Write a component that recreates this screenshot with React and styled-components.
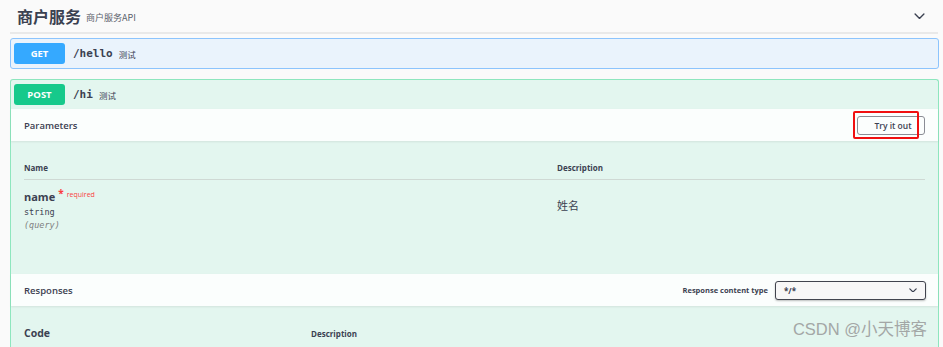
import React from 'react';
import styled, {createGlobalStyle, css} from 'styled-components';

const GlobalStyle = createGlobalStyle`
  html, body {
    margin: 0;
    padding: 0;
    background: #fafafa;
    font-family: "Open Sans", "Noto Sans CJK SC", sans-serif;
    color: #3b4151;
  }
`;

const methods = {
  get: {color: '#35a9ff', border: '#8cc4fd', bg: '#eaf3fc'},
  post: {color: '#16c98b', border: '#8ee6be', bg: '#e3f6ef'},
};

const Page = styled.div`
  position: relative;
  width: 943px;
  height: 347px;
  overflow: hidden;
  padding: 0 4px 0 10px;
  box-sizing: border-box;
`;

const TagHeader = styled.div`
  display: flex;
  align-items: center;
  height: 32px;
  padding: 0 13px 0 7px;
  border-bottom: 2px solid #e9e9e9;
  margin-right: 1px;
`;

const TagTitle = styled.h3`
  margin: 0;
  font-size: 16px;
  font-weight: 700;
  color: #3b4151;
  font-family: "Noto Sans CJK SC", sans-serif;
`;

const TagSub = styled.small`
  margin-left: 5px;
  font-size: 9px;
  color: #5a5f6b;
  font-family: "Noto Sans CJK SC", sans-serif;
  padding-top: 3px;
`;

const Spacer = styled.div`
  flex: 1;
`;

const Opblock = styled.div`
  margin-top: ${p => (p.$method === 'get' ? '4px' : '10px')};
  border: 1px solid ${p => methods[p.$method].border};
  background: ${p => methods[p.$method].bg};
  border-radius: 3px;
  ${p =>
    p.$open &&
    css`
      border-bottom: none;
      border-radius: 3px 3px 0 0;
    `}
`;

const Summary = styled.div`
  display: flex;
  align-items: center;
  padding: 4px 3px;
`;

const Badge = styled.span`
  display: inline-flex;
  align-items: center;
  justify-content: center;
  width: 51px;
  height: 21px;
  border-radius: 3px;
  background: ${p => methods[p.$method].color};
  color: #fff;
  font-size: 9.5px;
  font-weight: 700;
  font-family: "Open Sans", sans-serif;
`;

const Path = styled.span`
  margin-left: 8px;
  font-family: "DejaVu Sans Mono", monospace;
  font-weight: 700;
  font-size: 11px;
  color: #3b4151;
`;

const PathDesc = styled.span`
  margin-left: 6px;
  font-size: 8.5px;
  color: #3b4151;
  font-family: "Noto Sans CJK SC", sans-serif;
`;

const SectionHeader = styled.div`
  display: flex;
  align-items: center;
  justify-content: space-between;
  height: 32px;
  padding: 0 13px;
  background: rgba(255, 255, 255, 0.85);
  box-shadow: 0 1px 2px rgba(0, 0, 0, 0.08);
`;

const SectionTitle = styled.h4`
  margin: 0;
  font-size: 9.5px;
  font-weight: 600;
  color: #3b4151;
`;

const TryWrap = styled.span`
  position: relative;
  display: inline-flex;
`;

const TryButton = styled.button`
  width: 68px;
  height: 19px;
  border: 1.5px solid #8a8d95;
  border-radius: 3px;
  background: transparent;
  font-family: "Open Sans", sans-serif;
  font-size: 8.5px;
  font-weight: 600;
  color: #3b4151;
  padding: 0 0 0 4px;
`;

const Highlight = styled.span`
  position: absolute;
  left: -4px;
  top: -5px;
  width: 66px;
  height: 28px;
  border: 2px solid #f01010;
  border-radius: 2px;
  box-sizing: border-box;
  pointer-events: none;
`;

const ParamsBody = styled.div`
  padding: 14px 13px 0;
  height: 133px;
  box-sizing: border-box;
`;

const Grid = styled.div`
  display: grid;
  grid-template-columns: 533px 1fr;
`;

const HeadCell = styled.div`
  font-size: 8px;
  font-weight: 700;
  color: #3b4151;
  padding: 7px 0 6px;
  border-bottom: 1.5px solid #cfd9d4;
`;

const Cell = styled.div`
  padding-top: 9px;
`;

const ParamName = styled.div`
  font-size: 11px;
  font-weight: 700;
  color: #3b4151;
  display: flex;
  align-items: flex-start;
`;

const Required = styled.span`
  color: #f93e3e;
  font-size: 7px;
  font-weight: 400;
  margin-left: 3px;
  position: relative;
  top: -3px;
  &::before {
    content: '*';
    font-size: 10px;
    font-weight: 700;
    margin-right: 3px;
  }
`;

const ParamType = styled.div`
  font-family: "DejaVu Sans Mono", monospace;
  font-size: 8.5px;
  color: #3b4151;
  margin-top: 3px;
`;

const ParamIn = styled.div`
  font-family: "DejaVu Sans Mono", monospace;
  font-size: 8.5px;
  font-style: italic;
  color: #808080;
  margin-top: 3px;
`;

const ParamDesc = styled.div`
  font-family: "Noto Sans CJK SC", sans-serif;
  font-size: 11px;
  color: #3b4151;
  padding-top: 17px;
`;

const ContentType = styled.label`
  display: flex;
  align-items: center;
  gap: 7px;
  font-size: 7.5px;
  font-weight: 700;
  color: #3b4151;
  margin-right: -1px;
`;

const Select = styled.div`
  display: flex;
  align-items: center;
  justify-content: space-between;
  width: 151px;
  height: 19px;
  box-sizing: border-box;
  border: 1.5px solid #41444e;
  border-radius: 3px;
  background: #f7f7f7;
  padding: 0 8px;
  font-size: 8px;
  font-weight: 700;
  box-shadow: 0 1px 2px rgba(0, 0, 0, 0.25);
`;

const RespGrid = styled.div`
  display: grid;
  grid-template-columns: 287px 1fr;
  padding: 20px 13px 30px;
  align-items: center;
`;

const CodeHead = styled.div`
  font-size: 10.5px;
  font-weight: 700;
  color: #3b4151;
`;

const DescHead = styled.div`
  font-size: 8px;
  font-weight: 700;
  color: #3b4151;
`;

const Watermark = styled.div`
  position: absolute;
  right: 16px;
  bottom: 7px;
  font-family: "Liberation Sans", "Noto Sans CJK SC", sans-serif;
  font-size: 16.5px;
  color: #a3a7a6;
`;

const Chevron = ({size = 12, w = 2}) => (
  <svg width={size} height={size * 0.6} viewBox="0 0 20 12">
    <path d="M2 2 L10 10 L18 2" fill="none" stroke="#3b4151" strokeWidth={w} strokeLinecap="round" />
  </svg>
);

export default function App() {
  return (
    <>
      <GlobalStyle />
      <Page>
        <TagHeader>
          <TagTitle>商户服务</TagTitle>
          <TagSub>商户服务API</TagSub>
          <Spacer />
          <Chevron size={11} w={2.5} />
        </TagHeader>

        <Opblock $method="get">
          <Summary>
            <Badge $method="get">GET</Badge>
            <Path>/hello</Path>
            <PathDesc>测试</PathDesc>
          </Summary>
        </Opblock>

        <Opblock $method="post" $open>
          <Summary>
            <Badge $method="post">POST</Badge>
            <Path>/hi</Path>
            <PathDesc>测试</PathDesc>
          </Summary>

          <SectionHeader>
            <SectionTitle>Parameters</SectionTitle>
            <TryWrap>
              <TryButton>Try it out</TryButton>
              <Highlight />
            </TryWrap>
          </SectionHeader>

          <ParamsBody>
            <Grid>
              <HeadCell>Name</HeadCell>
              <HeadCell>Description</HeadCell>
              <Cell>
                <ParamName>
                  name<Required>required</Required>
                </ParamName>
                <ParamType>string</ParamType>
                <ParamIn>(query)</ParamIn>
              </Cell>
              <ParamDesc>姓名</ParamDesc>
            </Grid>
          </ParamsBody>

          <SectionHeader>
            <SectionTitle>Responses</SectionTitle>
            <ContentType>
              Response content type
              <Select>
                <span>*/*</span>
                <Chevron size={8} w={3} />
              </Select>
            </ContentType>
          </SectionHeader>

          <RespGrid>
            <CodeHead>Code</CodeHead>
            <DescHead>Description</DescHead>
          </RespGrid>
        </Opblock>

        <Watermark>CSDN @小天博客</Watermark>
      </Page>
    </>
  );
}
